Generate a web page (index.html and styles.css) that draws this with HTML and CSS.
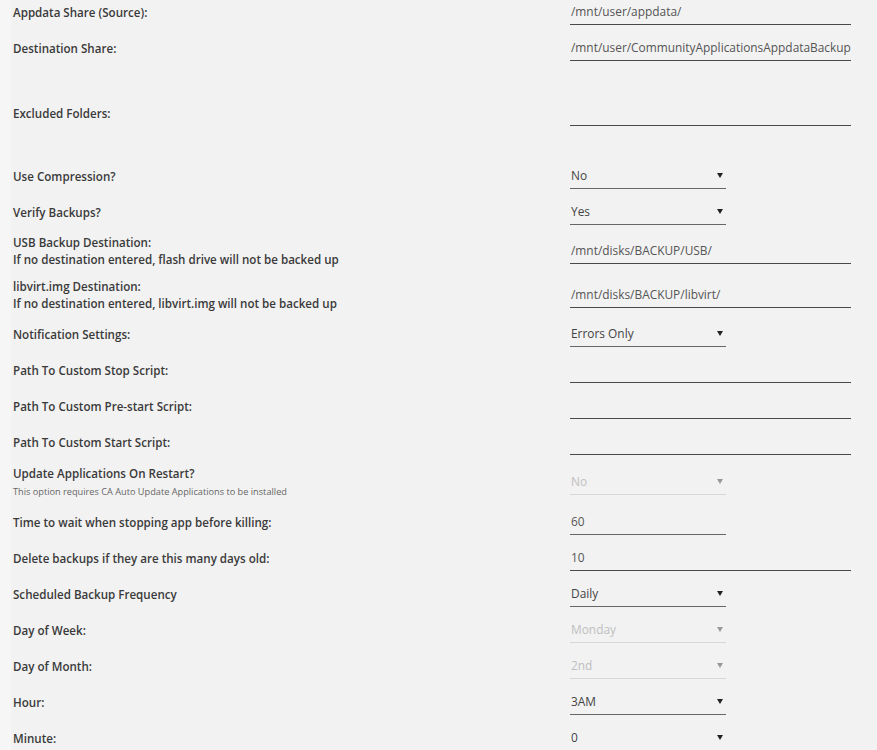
FILE: index.html
```html
<!DOCTYPE html>
<html lang="en">
<head>
    <meta charset="UTF-8">
    <title>Appdata Backup / Restore Settings</title>
    <link rel="stylesheet" href="styles.css">
</head>
<body>
    <div class="settings">
        <div class="row">
            <label class="label">Appdata Share (Source):</label>
            <input class="text" type="text" value="/mnt/user/appdata/">
        </div>
        <div class="row">
            <label class="label">Destination Share:</label>
            <input class="text" type="text" value="/mnt/user/CommunityApplicationsAppdataBackup">
        </div>
        <div class="row excluded">
            <label class="label">Excluded Folders:</label>
            <input class="text" type="text" value="">
        </div>
        <div class="row after-excluded">
            <label class="label">Use Compression?</label>
            <span class="select"><select><option>No</option><option>Yes</option></select></span>
        </div>
        <div class="row">
            <label class="label">Verify Backups?</label>
            <span class="select"><select><option>Yes</option><option>No</option></select></span>
        </div>
        <div class="row tall">
            <label class="label">USB Backup Destination:<br>If no destination entered, flash drive will not be backed up</label>
            <input class="text" type="text" value="/mnt/disks/BACKUP/USB/">
        </div>
        <div class="row tall spaced">
            <label class="label">libvirt.img Destination:<br>If no destination entered, libvirt.img will not be backed up</label>
            <input class="text" type="text" value="/mnt/disks/BACKUP/libvirt/">
        </div>
        <div class="row">
            <label class="label">Notification Settings:</label>
            <span class="select"><select><option>Errors Only</option><option>Disabled</option><option>Enabled</option></select></span>
        </div>
        <div class="row">
            <label class="label">Path To Custom Stop Script:</label>
            <input class="text" type="text" value="">
        </div>
        <div class="row">
            <label class="label">Path To Custom Pre-start Script:</label>
            <input class="text" type="text" value="">
        </div>
        <div class="row">
            <label class="label">Path To Custom Start Script:</label>
            <input class="text" type="text" value="">
        </div>
        <div class="row tall with-note">
            <label class="label">Update Applications On Restart?<span class="note">This option requires CA Auto Update Applications to be installed</span></label>
            <span class="select disabled"><select disabled><option>No</option></select></span>
        </div>
        <div class="row">
            <label class="label">Time to wait when stopping app before killing:</label>
            <input class="text short" type="text" value="60">
        </div>
        <div class="row">
            <label class="label">Delete backups if they are this many days old:</label>
            <input class="text" type="text" value="10">
        </div>
        <div class="row">
            <label class="label">Scheduled Backup Frequency</label>
            <span class="select"><select><option>Daily</option><option>Weekly</option><option>Monthly</option></select></span>
        </div>
        <div class="row">
            <label class="label">Day of Week:</label>
            <span class="select disabled"><select disabled><option>Monday</option></select></span>
        </div>
        <div class="row">
            <label class="label">Day of Month:</label>
            <span class="select disabled"><select disabled><option>2nd</option></select></span>
        </div>
        <div class="row">
            <label class="label">Hour:</label>
            <span class="select"><select><option>3AM</option></select></span>
        </div>
        <div class="row">
            <label class="label">Minute:</label>
            <span class="select dark"><select><option>0</option></select></span>
        </div>
    </div>
</body>
</html>
```

FILE: styles.css
```css
/* Settings form: label column on the left, inputs with underline only on the right */
body {
    margin: 0;
    background: #f6f6f6;
    font-family: "Open Sans", "Noto Sans", sans-serif;
    overflow: hidden;
}
.settings {
    margin-left: 11px;
    padding-left: 2px;
    background: #f2f2f2;
    display: flex;
    flex-direction: column;
    gap: 12px;
    min-height: 100vh;
}
.row {
    display: flex;
    align-items: center;
    height: 24px;
}
.row.tall {
    height: 30px;
}
.row.spaced {
    margin-top: 2px;
}
.row.with-note {
    height: 32px;
}
.row.excluded {
    margin-top: 29px;
}
.row.after-excluded {
    margin-top: 27px;
}
.label {
    width: 557px;
    flex: none;
    font-size: 11.6px;
    font-weight: 600;
    line-height: 17px;
    color: #3a3a3a;
}
.label .note {
    display: block;
    margin-top: 3px;
    font-size: 9.2px;
    font-weight: 400;
    line-height: 14px;
    color: #666;
}
.text {
    box-sizing: border-box;
    width: 281px;
    height: 25px;
    margin: 0;
    padding: 0 0 1px 1px;
    border: none;
    border-bottom: 1px solid #4a4a4a;
    background: transparent;
    font-family: inherit;
    font-size: 11.9px;
    color: #555;
    outline: none;
}
.text.short {
    width: 156px;
    border-bottom-color: #666;
}
/* dropdowns draw their own small arrow */
.select {
    position: relative;
    display: block;
    width: 156px;
}
.select select {
    appearance: none;
    box-sizing: border-box;
    width: 100%;
    height: 25px;
    margin: 0;
    padding: 0 0 1px 1px;
    border: none;
    border-bottom: 1px solid #666;
    border-radius: 0;
    background: transparent;
    font-family: inherit;
    font-size: 11.9px;
    color: #444;
    outline: none;
}
.select::after {
    content: "";
    position: absolute;
    right: 3px;
    top: 10px;
    border-left: 3px solid transparent;
    border-right: 3px solid transparent;
    border-top: 5px solid #222;
    pointer-events: none;
}
.select.dark select {
    border-bottom-color: #222;
}
.select.disabled select {
    color: #aaa;
    border-bottom-color: #ccc;
}
.select.disabled::after {
    border-top-color: #999;
}
```
